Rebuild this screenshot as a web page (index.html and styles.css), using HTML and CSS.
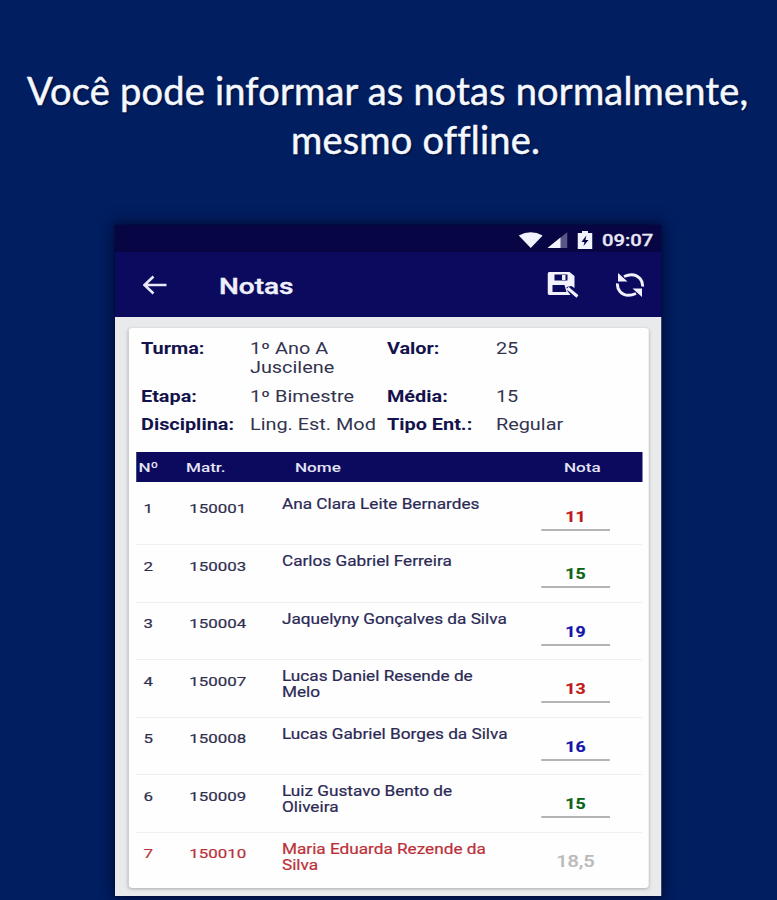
FILE: index.html
```
<!doctype html>
<html lang="pt-BR">

    <head>
        <meta charset="utf-8">
        <title>Notas</title>
        <link rel="stylesheet" href="styles.css">
    </head>

    <body>

        <h1 class="headline">
            <span class="line1">Você pode informar as notas normalmente,</span>
            <span class="line2">mesmo offline.</span>
        </h1>

        <div class="phone">

            <div class="statusBar">
                <svg class="icoWifi" viewBox="0 0 24 16" preserveAspectRatio="none"><path d="M0 3.5Q12 -3 24 3.5L12 16Z"/></svg>
                <svg class="icoSignal" viewBox="0 0 20 16" preserveAspectRatio="none"><path d="M0 16L20 0V16Z" opacity=".35"/><path d="M0 16L13 5.6V16Z"/></svg>
                <svg class="icoBattery" viewBox="0 0 15 18" preserveAspectRatio="none"><path fill-rule="evenodd" d="M4.500 0H10.500V2H15V18H0V2H4.500ZM8.800 4.500L4 11H7L6 15L11 9H8Z"/></svg>
                <span class="clock">09:07</span>
            </div>

            <div class="appBar">
                <svg class="icoBack" viewBox="0 0 24 20" preserveAspectRatio="none"><path d="M24 10H2M11 1.500L2 10L11 18.500"/></svg>
                <span class="appTitle">Notas</span>
                <svg class="icoSave" viewBox="0 0 31 26" preserveAspectRatio="none">
                    <path class="fill" fill-rule="evenodd" d="M2 0H22L27 4V16L24 14L19 15L20 19L23 23H2Q0 23 0 21V2Q0 0 2 0ZM7 2.500V8.500H20V2.500ZM5 13V20H19L17 13Z"/>
                    <path class="fill" d="M14.500 3H18V8H14.500Z"/>
                    <path class="stroke" d="M20 16L30 24.500"/>
                </svg>
                <svg class="icoSync" viewBox="0 0 30 24" preserveAspectRatio="none">
                    <path class="stroke" d="M9 3.500Q19 -1 25 5.500Q28 9 27.500 13.500M21 20.500Q11 25 5 18.500Q2 15 2.500 10.500"/>
                    <path class="fill" d="M3 0V8.500H12.500ZM27 24V15.500H17.500Z"/>
                </svg>
            </div>

            <div class="content">
                <div class="card">

                    <div class="info">
                        <b>Turma:</b><span>1º Ano A<br>Juscilene</span><b>Valor:</b><span>25</span>
                        <b>Etapa:</b><span>1º Bimestre</span><b>Média:</b><span>15</span>
                        <b>Disciplina:</b><span>Ling. Est. Mod</span><b>Tipo Ent.:</b><span>Regular</span>
                    </div>

                    <div class="grades">
                        <div class="gradesHeader">
                            <span class="hNum">Nº</span>
                            <span class="hMatr">Matr.</span>
                            <span class="hName">Nome</span>
                            <span class="hGrade">Nota</span>
                        </div>
                        <div class="row">
                            <span class="num">1</span><span class="matr">150001</span>
                            <span class="name">Ana Clara Leite Bernardes</span>
                            <span class="grade low">11</span>
                        </div>
                        <div class="row">
                            <span class="num">2</span><span class="matr">150003</span>
                            <span class="name">Carlos Gabriel Ferreira</span>
                            <span class="grade avg">15</span>
                        </div>
                        <div class="row">
                            <span class="num">3</span><span class="matr">150004</span>
                            <span class="name">Jaquelyny Gonçalves da Silva</span>
                            <span class="grade high">19</span>
                        </div>
                        <div class="row">
                            <span class="num">4</span><span class="matr">150007</span>
                            <span class="name">Lucas Daniel Resende de<br>Melo</span>
                            <span class="grade low">13</span>
                        </div>
                        <div class="row">
                            <span class="num">5</span><span class="matr">150008</span>
                            <span class="name">Lucas Gabriel Borges da Silva</span>
                            <span class="grade high">16</span>
                        </div>
                        <div class="row">
                            <span class="num">6</span><span class="matr">150009</span>
                            <span class="name">Luiz Gustavo Bento de<br>Oliveira</span>
                            <span class="grade avg">15</span>
                        </div>
                        <div class="row inactive">
                            <span class="num">7</span><span class="matr">150010</span>
                            <span class="name">Maria Eduarda Rezende da<br>Silva</span>
                            <span class="grade locked">18,5</span>
                        </div>
                    </div>

                </div>
            </div>
        </div>

    </body>

</html>
```
FILE: styles.css
```
* {
    box-sizing: border-box;
}

body {
    margin: 0;
    height: 900px;
    overflow: hidden;
    background: #001e60;
    font-family: Roboto, sans-serif;
}

.headline {
    margin: 0;
    padding-top: 66px;
    height: 225px;
    font: normal 38px/49px Lato, sans-serif;
    letter-spacing: 0.2px;
    color: #f4f8ff;
    -webkit-text-stroke: 0.5px #f4f8ff;
    text-shadow: 1px 1px 2px #000a30;
    white-space: nowrap;
}

.headline span {
    display: block;
}

.line1 {
    margin-left: 27px;
}

.line2 {
    margin-left: 291px;
}

/* the whole screen is stretched sideways, so widths in here are 1/1.25 */
.phone {
    width: 436.8px;
    height: 671px;
    margin-left: 115px;
    transform: scaleX(1.25);
    transform-origin: 0 0;
    box-shadow: 0 0 12px 2px #000c38, 0 0 2px #000420;
}

.phone svg {
    flex: none;
    fill: #f2f2ff;
}

.statusBar {
    display: flex;
    align-items: center;
    justify-content: flex-end;
    height: 27px;
    padding: 2px 6.4px 0 0;
    background: #070543;
}

.icoWifi { width: 19.2px; height: 16px; margin-right: 3.2px; }
.icoSignal { width: 16px; height: 16px; margin-right: 8px; }
.icoBattery { width: 12px; height: 18px; margin-right: 8px; }

.clock {
    width: 40.8px;
    padding-top: 1px;
    font-size: 16.2px;
    font-weight: 500;
    color: #e8e8f6;
    -webkit-text-stroke: 0.3px #e8e8f6;
}

.appBar {
    display: flex;
    align-items: center;
    height: 65px;
    padding: 0 12.8px 0 22.4px;
    background: #0b0a5e;
}

.phone .icoBack {
    width: 19.2px;
    height: 20px;
    fill: none;
    stroke: #e8e8f6;
    stroke-width: 2.6;
}

.appTitle {
    flex: 1;
    margin-left: 41.6px;
    padding-top: 3px;
    font-size: 22.4px;
    font-weight: 500;
    color: #f0f0fa;
    -webkit-text-stroke: 0.4px #f0f0fa;
}

.icoSave { width: 24.8px; height: 26px; margin-right: 28.8px; }
.icoSync { width: 24px; height: 24px; }

.stroke {
    fill: none;
    stroke: #f2f2ff;
    stroke-width: 3;
}

.content {
    height: 579px;
    padding: 11px 9.6px 8px 11.2px;
    background: #e9eaeb;
}

.card {
    height: 560px;
    padding: 11px 5.6px 0;
    background: #fefefe;
    border-radius: 3px;
    box-shadow: 0 1px 3px #aaa;
}

.info {
    display: grid;
    grid-template-columns: 87.2px 109.6px 87.2px auto;
    row-gap: 9.5px;
    height: 113px;
    padding-left: 4px;
    align-content: start;
    font-size: 15.9px;
    line-height: 19px;
    color: #33334f;
    white-space: nowrap;
}

.info b {
    color: #14124c;
}

.gradesHeader {
    display: flex;
    align-items: center;
    height: 29.5px;
    margin-bottom: 6px;
    background: #0b0a5e;
    color: #e4e4f4;
    font-size: 13.7px;
    font-weight: 500;
}

.hNum { width: 40px; padding-left: 2px; }
.hMatr { width: 87.2px; }
.hName { width: 215.2px; }

.row {
    display: grid;
    grid-template-columns: 42.6px 74.2px 207.2px 55.2px;
    align-items: start;
    height: 57.5px;
    border-bottom: 1px solid #f0f0f0;
    font-size: 13.5px;
    line-height: 16px;
    color: #2f2f4e;
    -webkit-text-stroke: 0.2px;
}

.row:last-child {
    border-bottom: none;
}

.num {
    padding: 12.5px 0 0 6px;
}

.matr {
    padding-top: 12.5px;
}

.name {
    padding-top: 8px;
    font-size: 13.75px;
    color: #2b2955;
}

.grade {
    height: 43px;
    padding-top: 21px;
    border-bottom: 2px solid #b4b4b4;
    text-align: center;
    font-size: 14.2px;
    font-weight: bold;
}

.low { color: #c01818; }
.avg { color: #0b6414; }
.high { color: #1414a8; }

.locked {
    border: none;
    color: #bbb;
    font-size: 16px;
    font-weight: 500;
}

.inactive .num,
.inactive .matr,
.inactive .name {
    color: #bb3038;
}
```
